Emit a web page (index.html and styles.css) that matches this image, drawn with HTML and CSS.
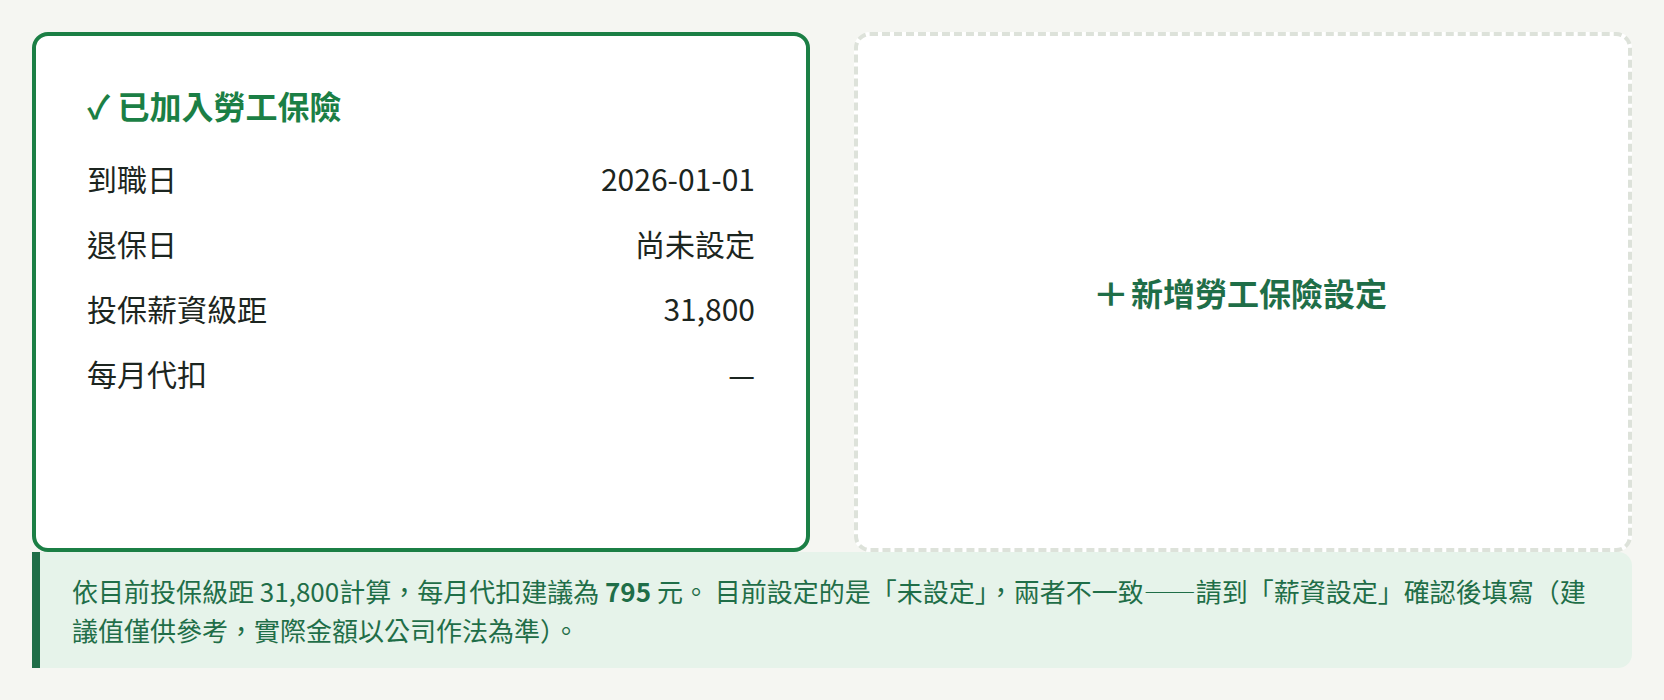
FILE: index.html
```html
<!DOCTYPE html>
<html lang="zh-Hant">
<head>
<meta charset="utf-8">
<link rel="stylesheet" href="styles.css">
</head>
<body>
<div class="page">
  <div class="cards">
    <section class="card card-active">
      <h2 class="card-title">✓ 已加入勞工保險</h2>
      <div class="row"><span class="label">到職日</span><span class="value">2026-01-01</span></div>
      <div class="row"><span class="label">退保日</span><span class="value">尚未設定</span></div>
      <div class="row"><span class="label">投保薪資級距</span><span class="value">31,800</span></div>
      <div class="row"><span class="label">每月代扣</span><span class="value">—</span></div>
    </section>
    <button class="card card-add" type="button"><span class="plus">＋</span>新增勞工保險設定</button>
  </div>
  <p class="note">依目前投保級距 31,800計算，每月代扣建議為 <strong>795</strong> 元。 目前設定的是「未設定」，兩者不一致——請到「薪資設定」確認後填寫（建議值僅供參考，實際金額以公司作法為準）。</p>
</div>
</body>
</html>
```
FILE: styles.css
```css
html, body {
  margin: 0;
  padding: 0;
  background: #f5f6f2;
}
body {
  font-family: "Noto Sans CJK TC", "Noto Sans", sans-serif;
  color: #1c2520;
}
.page {
  padding: 32px;
}
.cards {
  display: grid;
  grid-template-columns: 1fr 1fr;
  gap: 44px;
}
.card {
  box-sizing: border-box;
  min-height: 520px;
  border-radius: 16px;
  background: #ffffff;
}
.card-active {
  border: 4px solid #1b7f45;
  padding: 45px 51px;
}
.card-title {
  margin: 0 0 17px;
  font-size: 32px;
  line-height: 48px;
  font-weight: 700;
  color: #1b7f45;
}
.row {
  display: flex;
  justify-content: space-between;
  font-size: 30px;
  line-height: 45px;
  padding: 10px 0;
}
.card-add {
  border: 4px dashed #dde2da;
  font-family: inherit;
  font-size: 32px;
  font-weight: 700;
  color: #1f6e48;
  display: flex;
  align-items: center;
  justify-content: center;
  cursor: pointer;
}
.plus {
  display: inline-block;
  transform: scaleX(1.15);
  margin-left: -4px;
  margin-right: 4px;
}
.note {
  margin: 0;
  background: #e6f3ea;
  border-left: 8px solid #1f6e48;
  border-radius: 0 14px 14px 0;
  padding: 19px 32px;
  font-size: 26px;
  line-height: 39px;
  color: #1f6e48;
}
.note strong {
  font-weight: 700;
}
```
